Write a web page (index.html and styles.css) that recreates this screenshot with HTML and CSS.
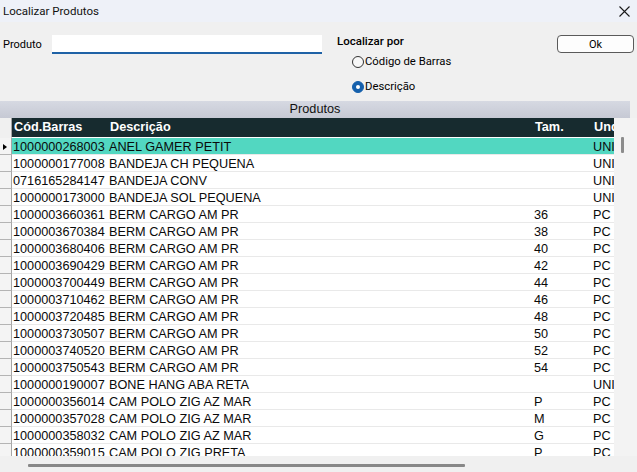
FILE: index.html
```html
<!DOCTYPE html>
<html lang="pt">
<head>
<meta charset="utf-8">
<title>Localizar Produtos</title>
<link rel="stylesheet" href="styles.css">
</head>
<body>
<div class="window">
  <div class="titlebar">
    <span class="title">Localizar Produtos</span>
    <svg class="close" width="11" height="11" viewBox="0 0 11 11"><path d="M0.5 0.5L10.5 10.5M10.5 0.5L0.5 10.5" stroke="#1a1a1a" stroke-width="1.1" fill="none"/></svg>
  </div>
  <div class="top">
    <div class="field">
      <span class="lbl">Produto</span>
      <div class="input"></div>
    </div>
    <div class="search-by">
      <div class="sb-title">Localizar por</div>
      <div class="radio r1"><span class="dot"></span>Código de Barras</div>
      <div class="radio r2 checked"><span class="dot"></span>Descrição</div>
    </div>
    <button class="ok">Ok</button>
  </div>
  <div class="caption-row"><div class="caption">Produtos</div></div>
  <div class="grid-wrap">
    <div class="grid">
      <div class="row head"><div class="c ind"></div><div class="c">Cód.Barras</div><div class="c">Descrição</div><div class="c tamh">Tam.</div><div class="c">Und</div></div>
      <div class="row sel"><div class="c ind"><span class="arrow"></span></div><div class="c">1000000268003</div><div class="c">ANEL GAMER PETIT</div><div class="c"></div><div class="c">UNI</div></div>
      <div class="row"><div class="c ind"></div><div class="c">1000000177008</div><div class="c">BANDEJA CH PEQUENA</div><div class="c"></div><div class="c">UNI</div></div>
      <div class="row"><div class="c ind"></div><div class="c">0716165284147</div><div class="c">BANDEJA CONV</div><div class="c"></div><div class="c">UNI</div></div>
      <div class="row"><div class="c ind"></div><div class="c">1000000173000</div><div class="c">BANDEJA SOL PEQUENA</div><div class="c"></div><div class="c">UNI</div></div>
      <div class="row"><div class="c ind"></div><div class="c">1000003660361</div><div class="c">BERM CARGO AM PR</div><div class="c">36</div><div class="c">PC</div></div>
      <div class="row"><div class="c ind"></div><div class="c">1000003670384</div><div class="c">BERM CARGO AM PR</div><div class="c">38</div><div class="c">PC</div></div>
      <div class="row"><div class="c ind"></div><div class="c">1000003680406</div><div class="c">BERM CARGO AM PR</div><div class="c">40</div><div class="c">PC</div></div>
      <div class="row"><div class="c ind"></div><div class="c">1000003690429</div><div class="c">BERM CARGO AM PR</div><div class="c">42</div><div class="c">PC</div></div>
      <div class="row"><div class="c ind"></div><div class="c">1000003700449</div><div class="c">BERM CARGO AM PR</div><div class="c">44</div><div class="c">PC</div></div>
      <div class="row"><div class="c ind"></div><div class="c">1000003710462</div><div class="c">BERM CARGO AM PR</div><div class="c">46</div><div class="c">PC</div></div>
      <div class="row"><div class="c ind"></div><div class="c">1000003720485</div><div class="c">BERM CARGO AM PR</div><div class="c">48</div><div class="c">PC</div></div>
      <div class="row"><div class="c ind"></div><div class="c">1000003730507</div><div class="c">BERM CARGO AM PR</div><div class="c">50</div><div class="c">PC</div></div>
      <div class="row"><div class="c ind"></div><div class="c">1000003740520</div><div class="c">BERM CARGO AM PR</div><div class="c">52</div><div class="c">PC</div></div>
      <div class="row"><div class="c ind"></div><div class="c">1000003750543</div><div class="c">BERM CARGO AM PR</div><div class="c">54</div><div class="c">PC</div></div>
      <div class="row"><div class="c ind"></div><div class="c">1000000190007</div><div class="c">BONE HANG ABA RETA</div><div class="c"></div><div class="c">UNI</div></div>
      <div class="row"><div class="c ind"></div><div class="c">1000000356014</div><div class="c">CAM POLO ZIG AZ MAR</div><div class="c">P</div><div class="c">PC</div></div>
      <div class="row"><div class="c ind"></div><div class="c">1000000357028</div><div class="c">CAM POLO ZIG AZ MAR</div><div class="c">M</div><div class="c">PC</div></div>
      <div class="row"><div class="c ind"></div><div class="c">1000000358032</div><div class="c">CAM POLO ZIG AZ MAR</div><div class="c">G</div><div class="c">PC</div></div>
      <div class="row"><div class="c ind"></div><div class="c">1000000359015</div><div class="c">CAM POLO ZIG PRETA</div><div class="c">P</div><div class="c">PC</div></div>
    </div>
    <div class="vscroll"><div class="vthumb"></div></div>
  </div>
  <div class="hscroll"><div class="hthumb"></div></div>
</div>
</body>
</html>
```

FILE: styles.css
```css
html, body {
  margin: 0;
  padding: 0;
}
body {
  width: 637px;
  height: 472px;
  overflow: hidden;
  background: #f0f0f0;
}
.window {
  width: 637px;
  height: 472px;
  display: flex;
  flex-direction: column;
  font-family: Roboto, "Liberation Sans", sans-serif;
  color: #000;
}
.titlebar {
  height: 22px;
  flex: 0 0 22px;
  display: flex;
  align-items: center;
  justify-content: space-between;
  padding: 0 7px 0 3px;
  background: #eef1f8;
}
.title {
  font-size: 11.5px;
  line-height: 22px;
  color: #111;
}
.close {
  display: block;
}
.top {
  height: 79px;
  flex: 0 0 79px;
  display: flex;
  align-items: flex-start;
  font-size: 11px;
}
.field {
  display: flex;
  align-items: center;
  margin-top: 12px;
}
.lbl {
  width: 49px;
  padding-left: 3px;
  line-height: 19px;
  padding-top: 1px;
}
.input {
  width: 270px;
  height: 19px;
  box-sizing: border-box;
  background: #fff;
  border-bottom: 2px solid #1f62a6;
}
.search-by {
  margin-left: 15px;
  margin-top: 12px;
}
.sb-title {
  height: 15px;
  line-height: 15px;
  font-weight: 500;
  font-size: 11.5px;
}
.radio {
  display: flex;
  align-items: center;
  height: 16px;
  margin-left: 15px;
  line-height: 16px;
  font-size: 11.3px;
}
.r1 { margin-top: 5px; }
.r2 { margin-top: 9px; }
.dot {
  width: 12px;
  height: 12px;
  box-sizing: border-box;
  border: 1px solid #333;
  border-radius: 50%;
  background: #f7f7f7;
  margin-right: 1px;
  display: flex;
  align-items: center;
  justify-content: center;
}
.checked .dot {
  background: #1560ac;
  border-color: #1560ac;
}
.checked .dot::after {
  content: "";
  width: 4px;
  height: 4px;
  border-radius: 50%;
  background: #fff;
}
.ok {
  margin: 13px 3px 0 auto;
  width: 77px;
  height: 18px;
  box-sizing: border-box;
  border: 1px solid #5a5a5a;
  border-radius: 4px;
  background: #fdfdfd;
  font-family: Roboto, "Liberation Sans", sans-serif;
  font-size: 11px;
  padding: 0;
  color: #000;
}
.caption-row {
  height: 17px;
  flex: 0 0 17px;
  display: flex;
}
.caption {
  width: 630px;
  height: 17px;
  line-height: 17px;
  text-align: center;
  background: linear-gradient(#d6d9e2, #c6c9d4);
  font-family: "Liberation Sans", Arial, sans-serif;
  font-size: 12.7px;
  color: #111;
}
.grid-wrap {
  height: 338px;
  flex: 0 0 338px;
  display: flex;
}
.grid {
  width: 614px;
  overflow: hidden;
  background: #fff;
  font-family: "Liberation Sans", Arial, sans-serif;
  font-size: 12.7px;
}
.row {
  display: grid;
  grid-template-columns: 12px 96px 425px 59px 22px;
  height: 17px;
}
.c {
  box-sizing: border-box;
  height: 17px;
  line-height: 15px;
  padding: 2px 0 0 1px;
  white-space: nowrap;
  overflow: hidden;
  border-bottom: 1px solid #e9e9e9;
  color: #0a0a0a;
}
.ind {
  padding: 0;
  background: #f4f4f4;
  border-right: 1px solid #a6a6a6;
  border-bottom-color: #b4b4b4;
  display: flex;
  align-items: center;
}
.head {
  height: 20px;
}
.head .c {
  height: 20px;
  line-height: 19px;
  padding: 0 0 0 2px;
  background: #172b2f;
  color: #fff;
  font-weight: bold;
  border-bottom: 1px solid #fff;
}
.head .ind {
  background: #f0f0f0;
  border-bottom: 1px solid #f0f0f0;
  padding: 0;
}
.head .tamh {
  padding-left: 2px;
}
.sel .c {
  background: #52d7c1;
}
.sel .ind {
  background: #f4f4f4;
}
.arrow {
  width: 0;
  height: 0;
  margin-left: 3px;
  margin-top: 1px;
  border-left: 4px solid #000;
  border-top: 3px solid transparent;
  border-bottom: 3px solid transparent;
}
.vscroll {
  flex: 1;
  background: #f3f3f3;
}
.vthumb {
  width: 3px;
  height: 16px;
  margin: 19px 0 0 7px;
  background: #8c8c8c;
  border-radius: 1px;
}
.hscroll {
  flex: 1;
  background: #f0f0f0;
}
.hthumb {
  width: 437px;
  height: 3px;
  margin: 8px 0 0 28px;
  background: #888;
  border-radius: 1px;
}
```
